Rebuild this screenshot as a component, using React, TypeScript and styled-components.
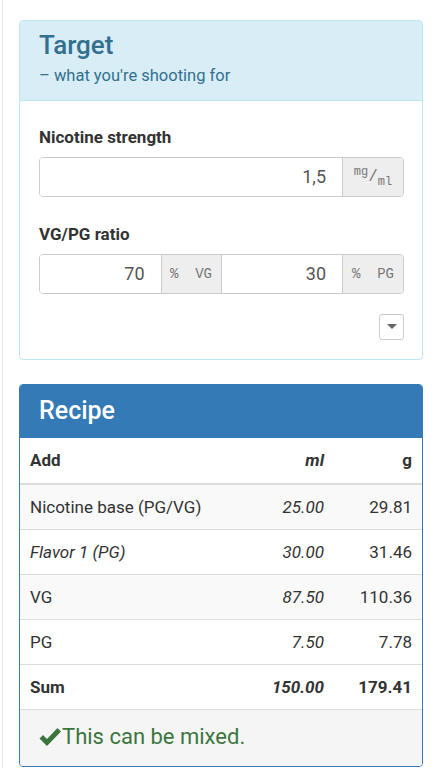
import React from 'react';
import styled, { createGlobalStyle } from 'styled-components';

const GlobalStyle = createGlobalStyle`
	html, body {
		margin: 0;
		padding: 0;
		background: #fff;
	}
	body {
		font-family: Roboto, 'Liberation Sans', sans-serif;
		color: #333;
	}
`;

const Page = styled.div`
	margin-left: 2px;
	border-left: 1px solid #e6e6e6;
	min-height: 768px;
	padding: 20px 18px 0 16px;
	box-sizing: border-box;
`;

const Panel = styled.section<{ $tone: 'info' | 'primary' }>`
	width: 404px;
	box-sizing: border-box;
	border: 1px solid ${(p) => (p.$tone === 'info' ? '#bce8f1' : '#337ab7')};
	border-radius: 4px;
	overflow: hidden;
	margin-bottom: 24px;
	background: #fff;
`;

const InfoHeading = styled.header`
	background: #d9edf7;
	color: #31708f;
	padding: 9px 19px 13px;
	border-bottom: 1px solid #bce8f1;
`;

const Title = styled.h2`
	margin: 0;
	font-size: 26px;
	line-height: 1.2;
	font-weight: 500;
`;

const Subtitle = styled.div`
	margin-top: 4px;
	font-size: 16.5px;
	line-height: 1.3;
`;

const PanelBody = styled.div`
	padding: 25px 18px 19px 19px;
`;

const FormGroup = styled.div`
	margin-bottom: 26px;
`;

const Label = styled.label`
	display: block;
	font-size: 17px;
	line-height: 1.3;
	font-weight: 700;
	color: #333;
	margin-bottom: 9px;
`;

const InputGroup = styled.div<{ $cols: string }>`
	display: grid;
	grid-template-columns: ${(p) => p.$cols};
	height: 40px;
	border: 1px solid #ccc;
	border-radius: 4px;
	overflow: hidden;
	box-sizing: border-box;
`;

const Field = styled.div`
	display: flex;
	align-items: center;
	justify-content: flex-end;
	padding-right: 16px;
	font-size: 18px;
	color: #555;
	background: #fff;
`;

const Addon = styled.div`
	display: flex;
	align-items: center;
	justify-content: center;
	background: #eee;
	border-left: 1px solid #ccc;
	border-right: 1px solid #ccc;
	font-family: 'Liberation Mono', 'DejaVu Sans Mono', monospace;
	font-size: 14px;
	color: #777;
	white-space: pre;
	&:last-child {
		border-right: none;
	}
`;

const Sup = styled.span`
	font-size: 12px;
	position: relative;
	top: -5px;
`;

const Slash = styled.span`
	font-size: 16px;
`;

const Sub = styled.span`
	font-size: 12px;
	position: relative;
	top: 5px;
`;

const ToggleRow = styled.div`
	display: flex;
	justify-content: flex-end;
	margin-top: -6px;
`;

const Toggle = styled.button`
	width: 25px;
	height: 26px;
	padding: 0;
	border: 1px solid #ccc;
	border-radius: 3px;
	background: #fff;
	display: flex;
	align-items: center;
	justify-content: center;
`;

const PrimaryHeading = styled.header`
	background: #337ab7;
	color: #fff;
	padding: 9px 19px 10px;
	font-size: 25px;
	line-height: 34px;
	font-weight: 500;
`;

const Table = styled.table`
	width: 100%;
	table-layout: fixed;
	border-collapse: collapse;
	font-size: 17px;
	line-height: 22px;
`;

const Row = styled.tr<{ $striped?: boolean }>`
	background: ${(p) => (p.$striped ? '#f9f9f9' : '#fff')};
	border-top: 1px solid #ddd;
	&:first-child {
		border-top: none;
	}
`;

const HeadRow = styled.tr`
	border-bottom: 2px solid #ddd;
	th {
		padding-bottom: 12px;
	}
`;

const Cell = styled.td<{ $right?: boolean; $italic?: boolean; $bold?: boolean; $w?: number }>`
	padding: 11px 10px 11px;
	text-align: ${(p) => (p.$right ? 'right' : 'left')};
	font-style: ${(p) => (p.$italic ? 'italic' : 'normal')};
	font-weight: ${(p) => (p.$bold ? 700 : 400)};
	color: #333;
	white-space: nowrap;
	width: ${(p) => (p.$w ? `${p.$w}px` : 'auto')};
`;

const Footer = styled.footer`
	background: #f5f5f5;
	border-top: 1px solid #ddd;
	padding: 12px 19px 14px;
	color: #3c763d;
	font-size: 22px;
	line-height: 30px;
	display: flex;
	align-items: center;
`;

const Check = () => (
	<svg width="22" height="20" viewBox="0 0 22 20" style={{ marginRight: 1 }}>
		<path d="M0.5 11.5 L4 8 L8 12 L18.5 1 L22 4.5 L8 19 Z" fill="#3c763d" />
	</svg>
);

const Caret = () => (
	<svg width="10" height="6" viewBox="0 0 10 6">
		<path d="M0 0 L10 0 L5 5 Z" fill="#666" />
	</svg>
);

const rows = [
	{ name: 'Nicotine base (PG/VG)', ml: '25.00', g: '29.81' },
	{ name: 'Flavor 1 (PG)', ml: '30.00', g: '31.46', italic: true },
	{ name: 'VG', ml: '87.50', g: '110.36' },
	{ name: 'PG', ml: '7.50', g: '7.78' },
];

export default function App() {
	return (
		<>
			<GlobalStyle />
			<Page>
				<Panel $tone="info">
					<InfoHeading>
						<Title>Target</Title>
						<Subtitle>– what you're shooting for</Subtitle>
					</InfoHeading>
					<PanelBody>
						<FormGroup>
							<Label>Nicotine strength</Label>
							<InputGroup $cols="1fr 61px">
								<Field>1,5</Field>
								<Addon>
									<Sup>mg</Sup>
									<Slash>/</Slash>
									<Sub>ml</Sub>
								</Addon>
							</InputGroup>
						</FormGroup>
						<FormGroup>
							<Label>VG/PG ratio</Label>
							<InputGroup $cols="1fr 61px 1fr 61px">
								<Field>70</Field>
								<Addon>%  VG</Addon>
								<Field>30</Field>
								<Addon>%  PG</Addon>
							</InputGroup>
						</FormGroup>
						<ToggleRow>
							<Toggle>
								<Caret />
							</Toggle>
						</ToggleRow>
					</PanelBody>
				</Panel>
				<Panel $tone="primary">
					<PrimaryHeading>Recipe</PrimaryHeading>
					<Table>
						<thead>
							<HeadRow>
								<Cell as="th" $bold>Add</Cell>
								<Cell as="th" $bold $italic $right $w={80}>ml</Cell>
								<Cell as="th" $bold $right $w={68}>g</Cell>
							</HeadRow>
						</thead>
						<tbody>
							{rows.map((r, i) => (
								<Row key={r.name} $striped={i % 2 === 0}>
									<Cell $italic={r.italic}>{r.name}</Cell>
									<Cell $italic $right>{r.ml}</Cell>
									<Cell $right>{r.g}</Cell>
								</Row>
							))}
							<Row>
								<Cell $bold>Sum</Cell>
								<Cell $bold $italic $right>150.00</Cell>
								<Cell $bold $right>179.41</Cell>
							</Row>
						</tbody>
					</Table>
					<Footer>
						<Check />
						This can be mixed.
					</Footer>
				</Panel>
			</Page>
		</>
	);
}
